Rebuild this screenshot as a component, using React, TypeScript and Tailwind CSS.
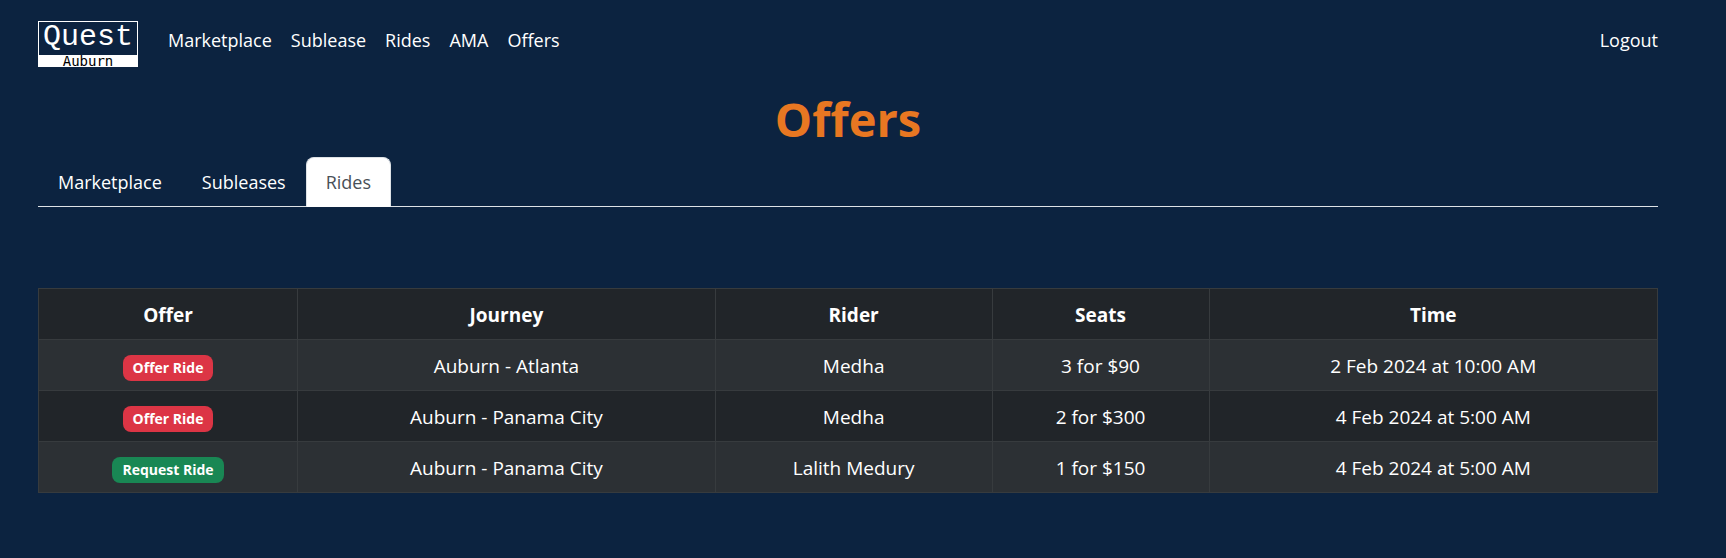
import clsx from "clsx";

type NavItem = {
  href: string;
  label: string;
};

type RideOffer = {
  id: number;
  kind: "offer" | "request";
  journey: string;
  rider: string;
  seats: string;
  time: string;
};

const navItems: NavItem[] = [
  { href: "#marketplace", label: "Marketplace" },
  { href: "#sublease", label: "Sublease" },
  { href: "#rides", label: "Rides" },
  { href: "#ama", label: "AMA" },
  { href: "#offers", label: "Offers" },
];

const tabs = ["Marketplace", "Subleases", "Rides"];

const columns = [
  { label: "Offer", width: "w-[16%]" },
  { label: "Journey", width: "w-[25.8%]" },
  { label: "Rider", width: "w-[17.1%]" },
  { label: "Seats", width: "w-[13.4%]" },
  { label: "Time", width: "w-[27.7%]" },
];

const rides: RideOffer[] = [
  {
    id: 1,
    kind: "offer",
    journey: "Auburn - Atlanta",
    rider: "Medha",
    seats: "3 for $90",
    time: "2 Feb 2024 at 10:00 AM",
  },
  {
    id: 2,
    kind: "offer",
    journey: "Auburn - Panama City",
    rider: "Medha",
    seats: "2 for $300",
    time: "4 Feb 2024 at 5:00 AM",
  },
  {
    id: 3,
    kind: "request",
    journey: "Auburn - Panama City",
    rider: "Lalith Medury",
    seats: "1 for $150",
    time: "4 Feb 2024 at 5:00 AM",
  },
];

function Logo() {
  return (
    <a href="#home" className="flex w-[100px] flex-col border border-white text-center">
      <span className="h-[33px] font-['Liberation_Mono',monospace] text-[30px] leading-[30px] text-white">
        Quest
      </span>
      <span className="h-[11px] bg-white font-['DejaVu_Sans_Mono',monospace] text-[14px] leading-[13px] text-black">
        Auburn
      </span>
    </a>
  );
}

function Navbar() {
  return (
    <nav className="flex items-start pt-[21px] text-[18px]">
      <Logo />
      <ul className="ml-[30px] flex gap-[19px] pt-1">
        {navItems.map((item) => (
          <li key={item.href}>
            <a href={item.href}>{item.label}</a>
          </li>
        ))}
      </ul>
      <a href="#logout" className="ml-auto pt-1">
        Logout
      </a>
    </nav>
  );
}

function Tabs({ active }: { active: string }) {
  return (
    <div role="tablist" className="flex border-b border-[#dee2e6] text-[18px]">
      {tabs.map((tab) => (
        <button
          key={tab}
          type="button"
          role="tab"
          aria-selected={tab === active}
          className={clsx(
            "-mb-px rounded-t-lg border px-[19px] py-[9px]",
            tab === active
              ? "border-[#dee2e6] border-b-white bg-white text-[#495057]"
              : "border-transparent text-white",
          )}
        >
          {tab}
        </button>
      ))}
    </div>
  );
}

function KindBadge({ kind }: { kind: RideOffer["kind"] }) {
  return (
    <span
      className={clsx(
        "inline-block rounded-lg px-[10px] py-[5px] text-[14px] leading-4 font-bold",
        kind === "offer" ? "bg-[#dc3545]" : "bg-[#198754]",
      )}
    >
      {kind === "offer" ? "Offer Ride" : "Request Ride"}
    </span>
  );
}

function RidesTable() {
  return (
    <table className="mt-[81px] w-full table-fixed border-collapse bg-[#212529] text-center">
      <thead>
        <tr>
          {columns.map((column) => (
            <th
              key={column.label}
              className={clsx("border border-[#373b3e] pt-[11px] pb-[9px] font-bold", column.width)}
            >
              {column.label}
            </th>
          ))}
        </tr>
      </thead>
      <tbody>
        {rides.map((ride) => (
          <tr key={ride.id} className="odd:bg-[#2c3034]">
            <td className="border border-[#373b3e] pt-[11px] pb-[9px]">
              <KindBadge kind={ride.kind} />
            </td>
            <td className="border border-[#373b3e] pt-[11px] pb-[9px]">{ride.journey}</td>
            <td className="border border-[#373b3e] pt-[11px] pb-[9px]">{ride.rider}</td>
            <td className="border border-[#373b3e] pt-[11px] pb-[9px]">{ride.seats}</td>
            <td className="border border-[#373b3e] pt-[11px] pb-[9px]">{ride.time}</td>
          </tr>
        ))}
      </tbody>
    </table>
  );
}

export default function App() {
  return (
    <div className="min-h-screen bg-[#0c2340] pr-[68px] pb-16 pl-[38px] font-['Open_Sans',sans-serif] text-[19px] leading-[30px] text-white">
      <Navbar />
      <main>
        <h1 className="mt-[22px] mb-[8px] text-center text-[47px] leading-[60px] font-bold text-[#e87722]">
          Offers
        </h1>
        <Tabs active="Rides" />
        <RidesTable />
      </main>
    </div>
  );
}
